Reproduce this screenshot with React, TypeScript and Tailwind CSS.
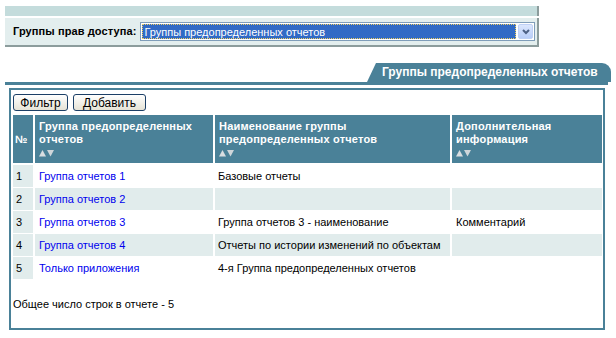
import React from "react";

const rows = [
  { n: "1", name: "Группа отчетов 1", title: "Базовые отчеты", info: "" },
  { n: "2", name: "Группа отчетов 2", title: "", info: "" },
  { n: "3", name: "Группа отчетов 3", title: "Группа отчетов 3 - наименование", info: "Комментарий" },
  { n: "4", name: "Группа отчетов 4", title: "Отчеты по истории изменений по объектам", info: "" },
  { n: "5", name: "Только приложения", title: "4-я Группа предопределенных отчетов", info: "" },
];

function SortArrows() {
  return (
    <svg width="16" height="8" viewBox="0 0 16 8" className="block mt-[3px]">
      <polygon points="0,7.5 3.5,1 7,7.5" fill="#d9dee1" />
      <polygon points="8,1 15,1 11.5,7.5" fill="#cfd6da" />
    </svg>
  );
}

function Btn({ children, w }: { children: React.ReactNode; w: string }) {
  return (
    <button
      className={`${w} h-[17px] rounded-[3px] border border-[#1c3f66] bg-gradient-to-b from-white to-[#e6e3d6] text-[12px] leading-none text-black`}
    >
      {children}
    </button>
  );
}

export default function App() {
  return (
    <div className="w-[616px] h-[338px] bg-white overflow-hidden font-['Liberation_Sans',Arial,sans-serif] text-[11px] text-black">
      {/* access group bar */}
      <div className="ml-[5px] mt-[6px] w-[534px]">
        <div className="h-[10px] bg-[#c4dcdc] border-r-2 border-[#8c9c9c]" />
        <div className="mt-[2px] h-[29px] bg-[#e3eeee] border-r-2 border-b-2 border-[#8c9c9c] flex items-center pl-[8px]">
          <span className="font-bold text-[11px] tracking-[0.1px]">Группы прав доступа:</span>
          <div className="ml-[4px] w-[395px] h-[19px] border border-[#7f9db9] bg-white flex items-center p-px">
            <div className="flex-1 h-full bg-[#316ac5] border border-dotted border-[#f0d060] text-white text-[11px] leading-[15px] pl-[1px]">
              Группы предопределенных отчетов
            </div>
            <div className="ml-[2px] w-[15px] h-full rounded-[2px] bg-gradient-to-b from-[#dce7fd] to-[#b8cdf8] border border-[#bfd1f6] flex items-center justify-center">
              <svg width="8" height="6" viewBox="0 0 8 6">
                <path d="M1 1 L4 4 L7 1" stroke="#4d6185" strokeWidth="2" fill="none" />
              </svg>
            </div>
          </div>
        </div>
      </div>

      {/* tab */}
      <div className="mt-[16px] flex justify-end pr-[5px]">
        <div className="w-[244px] h-[19px] bg-[#4a8198] rounded-tr-[9px] [clip-path:polygon(9px_0,100%_0,100%_100%,0_100%)] text-white font-bold text-[12px] leading-[19px] pl-[15px]">
          Группы предопределенных отчетов
        </div>
      </div>
      <div className="ml-[5px] mr-[8px] h-[3px] bg-[#4a8198]" />

      {/* panel */}
      <div className="mt-[3px] ml-[9px] w-[596px] h-[242px] border-2 border-[#4a8198] px-[2px] pt-[4px] flex flex-col">
        <div className="flex gap-[5px]">
          <Btn w="w-[55px]">Фильтр</Btn>
          <Btn w="w-[73px]">Добавить</Btn>
        </div>
        <table className="mt-[3px] border-separate border-spacing-x-[2px] border-spacing-y-[1px] w-[593px] -ml-[2px]">
          <thead>
            <tr className="text-white font-bold text-[11px] leading-[13px] tracking-[0.2px]">
              <th className="bg-[#4a8198] w-[20px] align-middle text-left pl-[2px]">№</th>
              <th className="bg-[#4a8198] w-[178px] h-[48px] text-left font-bold pl-[4px] pt-[5px] align-top">
                Группа предопределенных
                <br />
                отчетов
                <SortArrows />
              </th>
              <th className="bg-[#4a8198] w-[235px] text-left pl-[4px] pt-[5px] align-top">
                Наименование группы
                <br />
                предопределенных отчетов
                <SortArrows />
              </th>
              <th className="bg-[#4a8198] text-left pl-[4px] pt-[5px] align-top">
                Дополнительная
                <br />
                информация
                <SortArrows />
              </th>
            </tr>
          </thead>
          <tbody>
            <tr><td className="h-0 p-0" colSpan={4} /></tr>
            {rows.map((r, i) => {
              const bg = i % 2 === 1 ? "bg-[#e1ecec]" : "bg-white";
              return (
                <tr key={r.n} className="h-[22px] text-[11px]">
                  <td className="bg-[#e1ecec] pl-[3px]">{r.n}</td>
                  <td className={`${bg} pl-[4px]`}>
                    <a className="text-[#0000ee]">{r.name}</a>
                  </td>
                  <td className={`${bg} pl-[3px]`}>{r.title}</td>
                  <td className={`${bg} pl-[4px]`}>{r.info}</td>
                </tr>
              );
            })}
          </tbody>
        </table>
        <div className="mt-[16px] text-[11px]">Общее число строк в отчете - 5</div>
      </div>
    </div>
  );
}
